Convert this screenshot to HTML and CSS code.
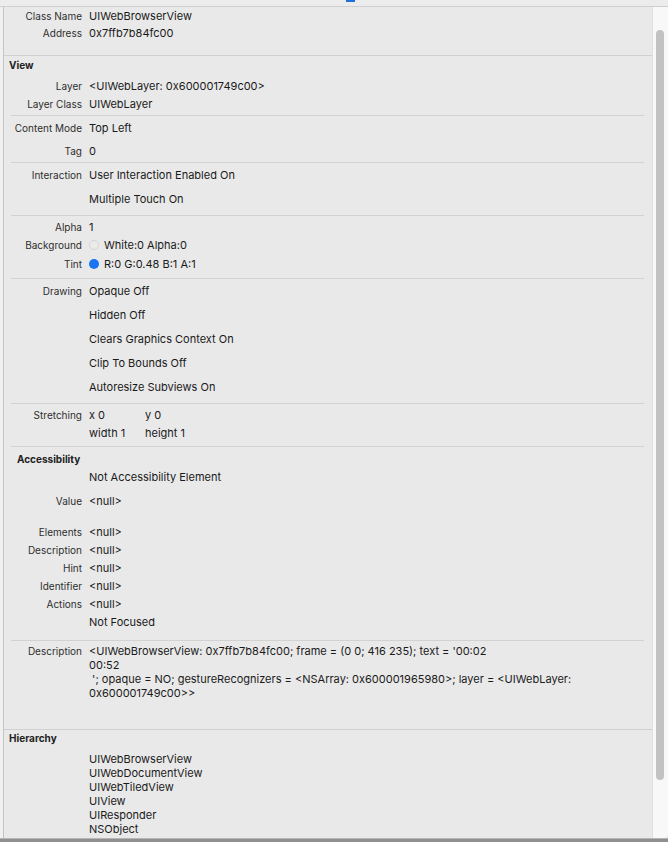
FILE: index.html
```html
<!DOCTYPE html>
<html>
<head>
<meta charset="utf-8">
<link rel="stylesheet" href="styles.css">
</head>
<body>
<div class="topbar"><span class="tab-mark"></span></div>
<div class="main">
  <div class="gutter"></div>
  <div class="inspector">
    <section class="section identity">
      <div class="row r17"><span class="label">Class Name</span><span class="value">UIWebBrowserView</span></div>
      <div class="row r17"><span class="label">Address</span><span class="value">0x7ffb7b84fc00</span></div>
    </section>

    <section class="section">
      <div class="header view-header">View</div>
      <div class="group g-layer">
        <div class="row r18"><span class="label">Layer</span><span class="value">&lt;UIWebLayer: 0x600001749c00&gt;</span></div>
        <div class="row r18"><span class="label">Layer Class</span><span class="value">UIWebLayer</span></div>
      </div>
      <div class="sep"></div>
      <div class="group">
        <div class="row r23"><span class="label">Content Mode</span><span class="value">Top Left</span></div>
        <div class="row r23"><span class="label">Tag</span><span class="value">0</span></div>
      </div>
      <div class="sep"></div>
      <div class="group pb4">
        <div class="row r24"><span class="label">Interaction</span><span class="value">User Interaction Enabled On</span></div>
        <div class="row r24"><span class="label"></span><span class="value">Multiple Touch On</span></div>
      </div>
      <div class="sep"></div>
      <div class="group pt2 pb4">
        <div class="row r18"><span class="label">Alpha</span><span class="value">1</span></div>
        <div class="row r18"><span class="label">Background</span><span class="value swatch-value"><span class="swatch clear"></span>White:0 Alpha:0</span></div>
        <div class="row r20"><span class="label">Tint</span><span class="value swatch-value"><span class="swatch blue"></span>R:0 G:0.48 B:1 A:1</span></div>
      </div>
      <div class="sep"></div>
      <div class="group pb4">
        <div class="row r24"><span class="label">Drawing</span><span class="value">Opaque Off</span></div>
        <div class="row r24"><span class="label"></span><span class="value">Hidden Off</span></div>
        <div class="row r24"><span class="label"></span><span class="value">Clears Graphics Context On</span></div>
        <div class="row r24"><span class="label"></span><span class="value">Clip To Bounds Off</span></div>
        <div class="row r24"><span class="label"></span><span class="value">Autoresize Subviews On</span></div>
      </div>
      <div class="sep"></div>
      <div class="group pt2 pb4">
        <div class="row r18"><span class="label">Stretching</span><span class="value pair"><span>x 0</span><span>y 0</span></span></div>
        <div class="row r18"><span class="label"></span><span class="value pair"><span>width 1</span><span>height 1</span></span></div>
      </div>
      <div class="sep"></div>
      <div class="group g-access">
        <div class="header access-header">Accessibility</div>
        <div class="row r18"><span class="label"></span><span class="value">Not Accessibility Element</span></div>
        <div class="row r24 value-row"><span class="label">Value</span><span class="value">&lt;null&gt;</span></div>
        <div class="row r18 elements-row"><span class="label">Elements</span><span class="value">&lt;null&gt;</span></div>
        <div class="row r18"><span class="label">Description</span><span class="value">&lt;null&gt;</span></div>
        <div class="row r18"><span class="label">Hint</span><span class="value">&lt;null&gt;</span></div>
        <div class="row r18"><span class="label">Identifier</span><span class="value">&lt;null&gt;</span></div>
        <div class="row r18"><span class="label">Actions</span><span class="value">&lt;null&gt;</span></div>
        <div class="row r18"><span class="label"></span><span class="value">Not Focused</span></div>
      </div>
      <div class="sep"></div>
      <div class="group g-desc">
        <div class="row desc-row"><span class="label">Description</span><span class="value desc">&lt;UIWebBrowserView: 0x7ffb7b84fc00; frame = (0 0; 416 235); text = '00:02
00:52
 '; opaque = NO; gestureRecognizers = &lt;NSArray: 0x600001965980&gt;; layer = &lt;UIWebLayer: 0x600001749c00&gt;&gt;</span></div>
      </div>
    </section>

    <section class="section hierarchy">
      <div class="header hier-header">Hierarchy</div>
      <ul class="hier-list">
        <li>UIWebBrowserView</li>
        <li>UIWebDocumentView</li>
        <li>UIWebTiledView</li>
        <li>UIView</li>
        <li>UIResponder</li>
        <li>NSObject</li>
      </ul>
    </section>
  </div>
  <div class="scrollbar"><div class="thumb"></div></div>
</div>
<div class="bottombar"></div>
</body>
</html>
```

FILE: styles.css
```css
* { box-sizing: border-box; }
html, body {
  margin: 0;
  padding: 0;
}
body {
  width: 668px;
  height: 842px;
  overflow: hidden;
  background: #e9e9e9;
  font-family: Inter, "Liberation Sans", sans-serif;
  color: #1e1e1e;
}
.topbar {
  height: 7px;
  background: #ececec;
  border-bottom: 1px solid #cfcfcf;
  display: flex;
  padding-left: 346px;
}
.tab-mark {
  width: 9px;
  height: 2px;
  background: #1f6fdc;
}
.main {
  display: flex;
  height: 831px;
}
.gutter {
  width: 4px;
  background: #f0f0f0;
  border-right: 1px solid #c4c4c4;
  flex: none;
}
.inspector {
  flex: 1;
  overflow: hidden;
  background: #e9e9e9;
}
.scrollbar {
  width: 16px;
  flex: none;
  background: #f8f8f8;
  border-left: 1px solid #e0e0e0;
  padding: 23px 3px 0 3px;
  border-bottom-right-radius: 4px;
}
.thumb {
  width: 8px;
  height: 750px;
  border-radius: 4px;
  background: #c2c2c2;
}
.bottombar {
  height: 4px;
  background: #8f8f8f;
  border-top: 1px solid #b5b5b5;
}

.section { border-top: 1px solid #d0d0d0; }
.section.identity { border-top: none; padding-bottom: 14px; }

.row {
  display: grid;
  grid-template-columns: 78px 1fr;
  column-gap: 7px;
  align-items: center;
}
.r17 { height: 17px; }
.r18 { height: 18px; }
.r20 { height: 20px; }
.r23 { height: 23px; }
.r24 { height: 24px; }

.label {
  text-align: right;
  font-size: 10px;
  color: #2e2e2e;
  white-space: nowrap;
}
.value {
  font-size: 11px;
  color: #1a1a1a;
  white-space: nowrap;
}

.header {
  font-size: 10px;
  font-weight: 700;
  color: #222;
}
.view-header {
  height: 18px;
  line-height: 18px;
  padding-left: 5px;
  margin-bottom: 3px;
}
.g-layer { padding-bottom: 2px; }
.pt2 { padding-top: 2px; }
.pb4 { padding-bottom: 4px; }

.sep {
  height: 1px;
  background: #d2d2d2;
  margin: 0 8px 0 7px;
}

.swatch-value {
  display: flex;
  align-items: center;
  gap: 5px;
}
.swatch {
  width: 10px;
  height: 10px;
  border-radius: 50%;
  flex: none;
}
.swatch.clear {
  background: #ebebeb;
  border: 1px solid #d6d6d6;
}
.swatch.blue { background: #1a73f0; }

.pair {
  display: grid;
  grid-template-columns: 56px auto;
}

.g-access { padding-top: 3px; padding-bottom: 9px; }
.access-header {
  height: 18px;
  line-height: 18px;
  padding-left: 13px;
}
.value-row { margin-top: 3px; }
.elements-row { margin-top: 10px; }

.g-desc { padding-top: 3px; padding-bottom: 29px; }
.desc-row { align-items: start; }
.desc-row .label { line-height: 14px; }
.desc {
  white-space: pre-wrap;
  line-height: 14px;
  padding-right: 8px;
}

.hier-header {
  height: 16px;
  line-height: 16px;
  padding-left: 5px;
  margin-bottom: 6px;
}
.hier-list {
  list-style: none;
  margin: 0;
  padding: 0 0 0 85px;
  font-size: 11px;
  line-height: 14px;
  color: #1a1a1a;
}
```
